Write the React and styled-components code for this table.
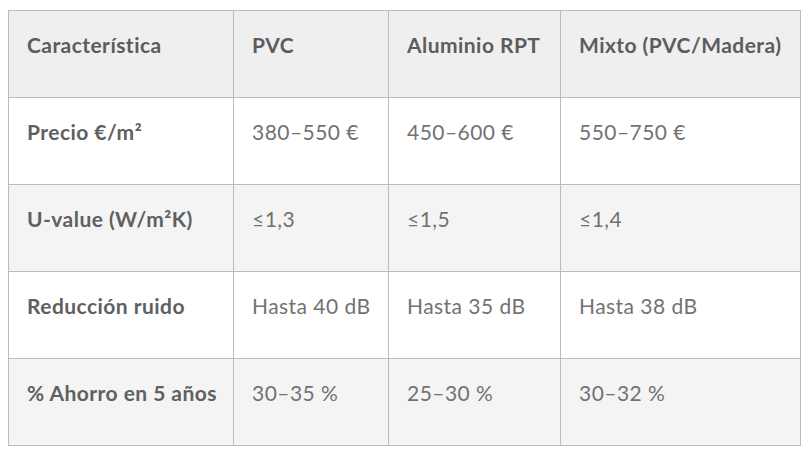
import styled, { createGlobalStyle } from "styled-components";

const rows = [
    ["Precio €/m²", "380–550 €", "450–600 €", "550–750 €"],
    ["U-value (W/m²K)", "≤1,3", "≤1,5", "≤1,4"],
    ["Reducción ruido", "Hasta 40 dB", "Hasta 35 dB", "Hasta 38 dB"],
    ["% Ahorro en 5 años", "30–35 %", "25–30 %", "30–32 %"],
];

const widths = [225, 155, 172, 240];

export default function App(){
    return(
        <>
            <Global />
            <Page>
                <Tabla>
                    <colgroup>
                        {widths.map((w, i) => <col key={i} style={{width: w}} />)}
                    </colgroup>
                    <thead>
                        <Fila $cabecera>
                            <Titulo>Característica</Titulo>
                            <Titulo>PVC</Titulo>
                            <Titulo>Aluminio RPT</Titulo>
                            <Titulo>Mixto (PVC/Madera)</Titulo>
                        </Fila>
                    </thead>
                    <tbody>
                        {rows.map((fila, i) =>
                            <Fila key={i} $gris={i % 2 === 1}>
                                <Etiqueta>{fila[0]}</Etiqueta>
                                {fila.slice(1).map((v, j) => <Valor key={j}>{v}</Valor>)}
                            </Fila>
                        )}
                    </tbody>
                </Tabla>
            </Page>
        </>
    );
}

const Global = createGlobalStyle`
    body {
        margin: 0;
        background: #ffffff;
        font-family: 'Lato', 'Liberation Sans', sans-serif;
    }
`

const Page = styled.div`
    width: 807px;
    height: 454px;
    padding: 10px 0 0 8px;
    box-sizing: border-box;
`

const Tabla = styled.table`
    border-collapse: collapse;
    table-layout: fixed;
    width: 792px;
`

const Fila = styled.tr`
    height: 87px;
    background: ${p => p.$cabecera ? "#efefef" : p.$gris ? "#f4f4f4" : "#ffffff"};
`

const Celda = styled.td`
    border: 1px solid #bcbcbc;
    padding: 19px 10px 37px 18px;
    vertical-align: top;
    font-size: 21px;
    line-height: 30px;
    letter-spacing: 0.45px;
    white-space: nowrap;
`

const Titulo = styled(Celda).attrs({as: "th"})`
    text-align: left;
    font-weight: 700;
    color: #5c5c5c;
`

const Etiqueta = styled(Celda)`
    font-weight: 700;
    color: #606060;
`

const Valor = styled(Celda)`
    font-weight: 400;
    color: #727272;
`
